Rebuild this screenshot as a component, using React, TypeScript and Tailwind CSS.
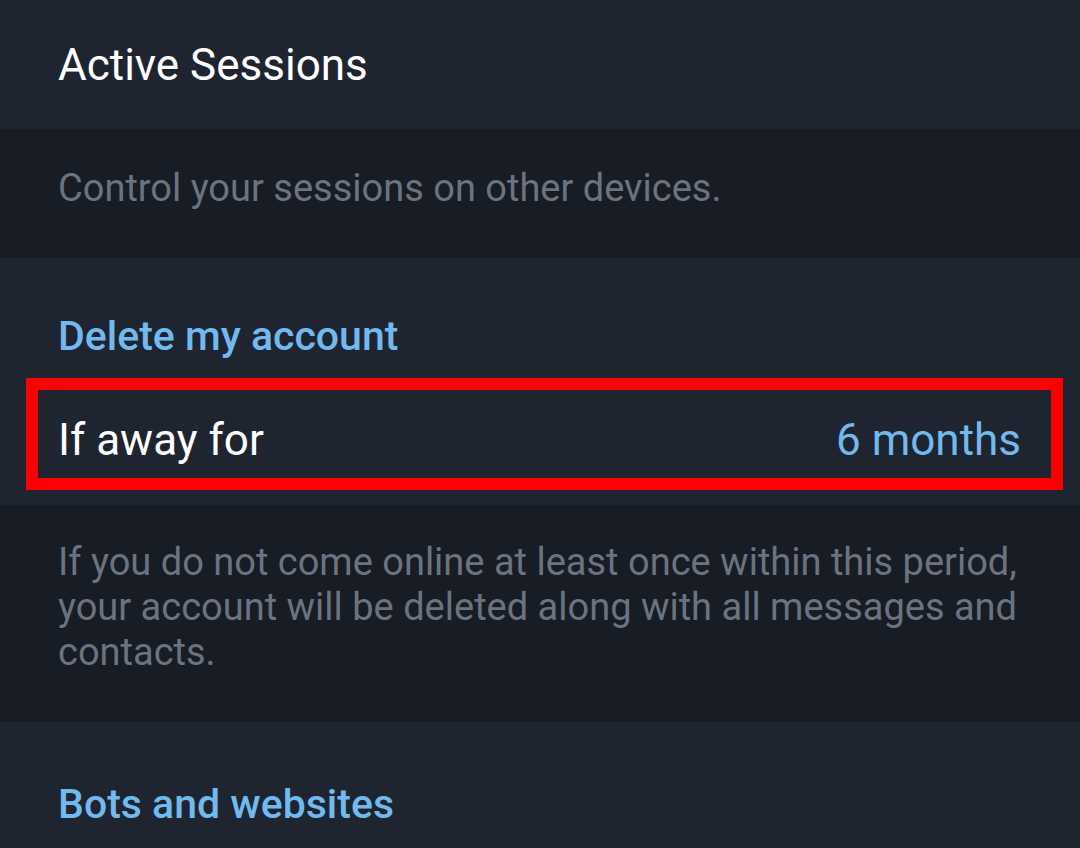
export default function App() {
  return (
    <div className="w-[1080px] h-[848px] overflow-hidden bg-[#1f2530] font-['Roboto',sans-serif]">
      <div className="h-[129px] pl-[58px] flex items-center">
        <span className="text-[44px] text-white">Active Sessions</span>
      </div>
      <div className="h-[129px] bg-[#171c25] pl-[58px] pb-[10px] flex items-center">
        <span className="text-[38px] text-[#6b7380]">Control your sessions on other devices.</span>
      </div>
      <div className="h-[247px] pt-[52px]">
        <div className="pl-[58px] text-[41px] font-medium text-[#71b9ee] leading-[52px]">Delete my account</div>
        <div className="mt-[16px] ml-[26px] mr-[17px] h-[112px] border-[12px] border-[#ff0000] flex items-center justify-between pl-[20px] pr-[30px] pt-[12px]">
          <span className="text-[44px] text-white">If away for</span>
          <span className="text-[44px] text-[#71b9ee]">6 months</span>
        </div>
      </div>
      <div className="h-[217px] bg-[#171c25] pl-[58px] pr-[40px] pt-[35px]">
        <p className="text-[38px] leading-[45px] text-[#6b7380]">
          If you do not come online at least once within this period, your account will be deleted along with all messages and contacts.
        </p>
      </div>
      <div className="pl-[58px] pt-[52px]">
        <span className="text-[41px] font-medium text-[#71b9ee]">Bots and websites</span>
      </div>
    </div>
  );
}
